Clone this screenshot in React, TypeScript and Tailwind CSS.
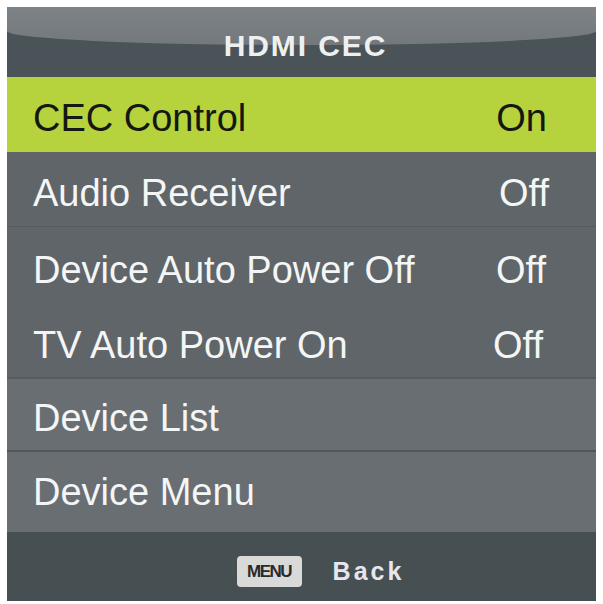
const rows = [
  { label: 'Audio Receiver', value: 'Off', h: 'h-[75px]' },
  { label: 'Device Auto Power Off', value: 'Off', h: 'h-[77px]' },
  { label: 'TV Auto Power On', value: 'Off', h: 'h-[73px]' },
];

export default function App() {
  return (
    <div className="w-[603px] h-[604px] bg-white pt-[7px] pl-[7px]" style={{ fontFamily: '"Liberation Sans", Arial, sans-serif' }}>
      <div className="w-[589px] h-[594px] flex flex-col bg-[#5f6568] overflow-hidden">
        {/* Header */}
        <div className="relative h-[70px] bg-[#4a5357] flex items-center justify-center pl-[8px] shrink-0">
          <div className="absolute inset-x-0 top-0 h-[38px] bg-gradient-to-b from-[#7e8387] to-[#73787c] rounded-b-[50%_14px]" />
          <span className="relative text-[30px] font-bold tracking-[1.9px] text-[#eef0f0] mt-[6px]">HDMI CEC</span>
        </div>

        {/* Selected row */}
        <div className="h-[75px] bg-[#b6d33e] flex items-center justify-between pl-[26px] pr-[49px] pt-[8px] shrink-0">
          <span className="text-[38px] text-[#141810]">CEC Control</span>
          <span className="text-[38px] text-[#141810]">On</span>
        </div>

        {rows.map((r, i) => (
          <div key={r.label} className={`${r.h} flex items-center justify-between pl-[26px] pt-[9px] shrink-0 ${i === 0 ? 'border-b border-[#555a5d]' : ''} ${i === 0 ? 'pr-[47px]' : i === 1 ? 'pr-[50px]' : 'pr-[53px]'}`}>
            <span className="text-[38px] text-[#f4f5f5]">{r.label}</span>
            <span className="text-[38px] text-[#f4f5f5]">{r.value}</span>
          </div>
        ))}

        <div className="h-[73px] bg-[#686e72] border-t-2 border-[#565b5e] flex items-center pl-[26px] pt-[8px] shrink-0">
          <span className="text-[38px] text-[#f4f5f5]">Device List</span>
        </div>
        <div className="h-[82px] bg-[#686e72] border-t-2 border-[#52575a] flex items-center pl-[26px] shrink-0">
          <span className="text-[38px] text-[#f4f5f5]">Device Menu</span>
        </div>

        {/* Footer */}
        <div className="flex-1 bg-[#465053] flex items-center justify-center gap-[31px] pl-[38px] pt-[10px]">
          <span className="bg-[#d9d9d7] rounded-[4px] w-[65px] h-[31px] flex items-center justify-center text-[17px] font-bold tracking-[-1.5px] text-[#2a2a2a]">MENU</span>
          <span className="text-[25px] font-bold tracking-[3px] text-[#e8e6ec]">Back</span>
        </div>
      </div>
    </div>
  );
}
